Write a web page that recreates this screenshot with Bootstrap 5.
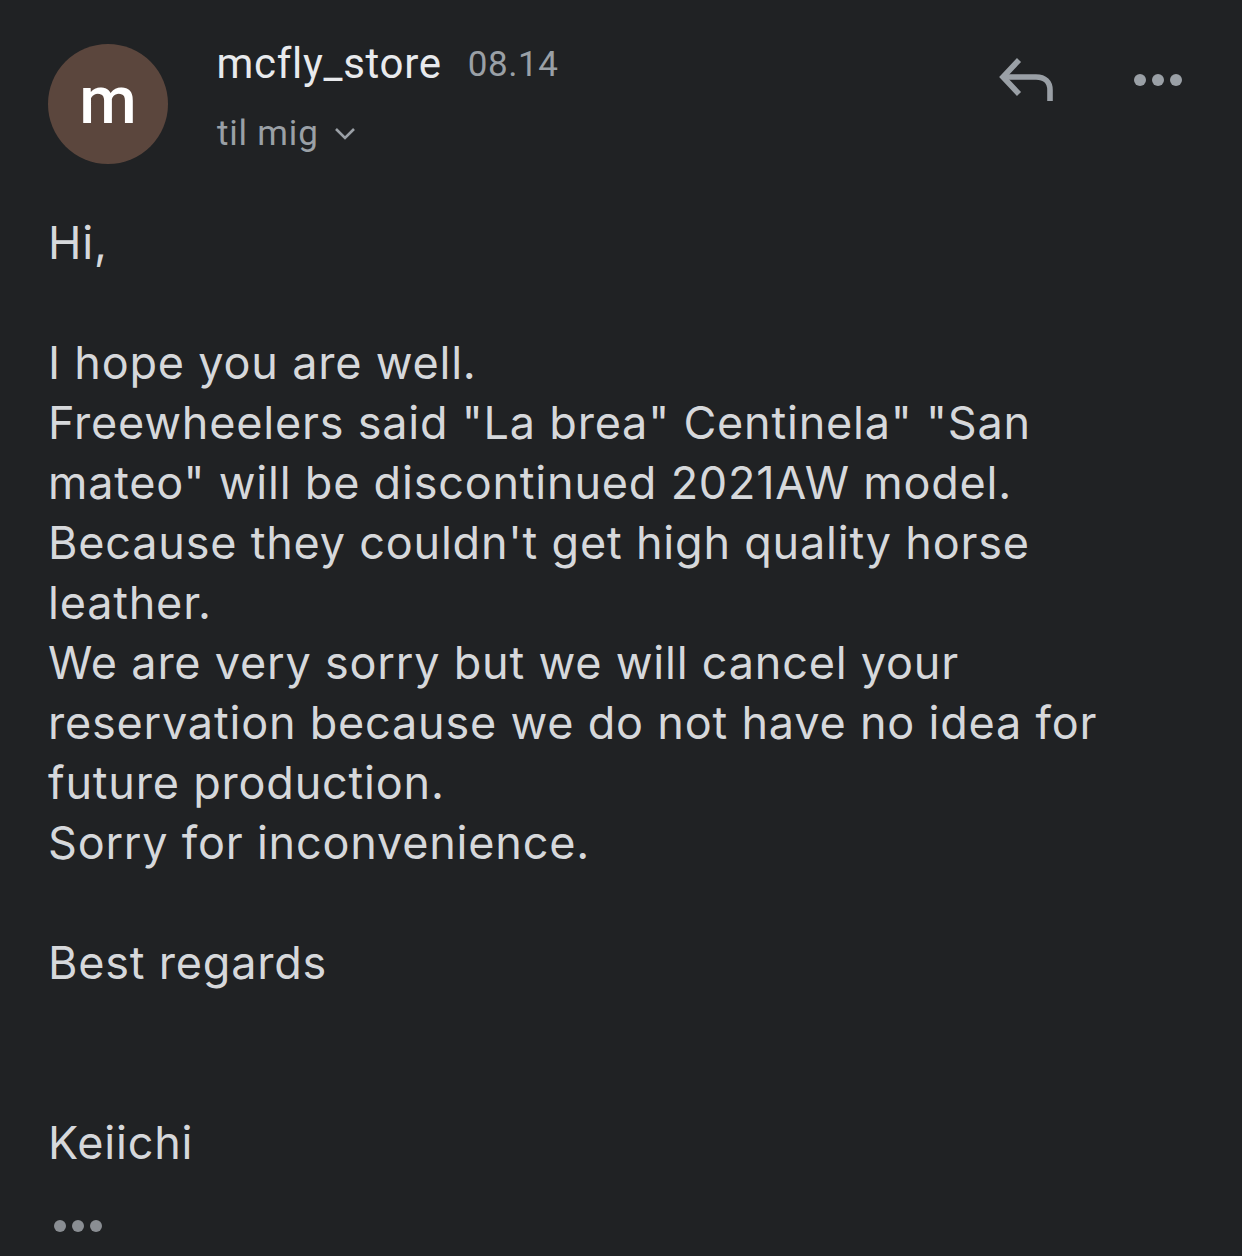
<!DOCTYPE html>
<html lang="da"><head><meta charset="utf-8"><title>Mail</title>
<link href="https://cdn.jsdelivr.net/npm/bootstrap@5.3.0/dist/css/bootstrap.min.css" rel="stylesheet">
<style>
html,body{background:#202224;margin:0}
body{width:1242px;height:1256px;overflow:hidden;font-family:Roboto,"Liberation Sans",sans-serif;color:#dadce0}
.mail-wrap{padding:44px 48px 0 48px}
.avatar-disc{width:120px;height:120px;border-radius:50%;background:#5b463d;color:#fff;font-size:66px;line-height:113px;text-align:center;font-family:Roboto,sans-serif;font-weight:500;flex:none}
.head-text{margin-left:49px;flex:1 1 auto}
.sender-name{font-size:42px;line-height:40px;color:#e8eaed;letter-spacing:.7px;margin-left:-.5px}
.sent-time{font-size:35px;line-height:42px;color:#9aa0a6;margin-left:26px;letter-spacing:.6px}
.to-line{font-size:35px;line-height:40px;color:#9aa0a6;margin-top:28px;letter-spacing:.8px}
.body-copy{font-family:Inter,"Liberation Sans",sans-serif;font-size:45px;line-height:60px;color:#d6d8db;margin-top:49px;letter-spacing:.79px;width:1100px}
.body-copy p{margin:0}
.gap-line{height:60px}
.head-actions{margin-top:13px;margin-right:11px;gap:79px}
.more-mark{margin-top:46px;margin-left:5px;display:block}
</style></head>
<body>
<div class="mail-wrap">
<div class="d-flex align-items-start">
<div class="avatar-disc">m</div>
<div class="head-text">
<div class="d-flex align-items-start"><span class="sender-name">mcfly_store</span><span class="sent-time">08.14</span></div>
<div class="to-line d-flex align-items-center">til mig
<svg width="22" height="14" viewBox="0 0 22 14" class="ms-3" fill="none" stroke="#9aa0a6" stroke-width="2.6"><path d="M1 2l9 9 9-9"/></svg></div>
</div>
<div class="d-flex align-items-center head-actions">
<svg width="56" height="46" viewBox="0 0 56 46" fill="none" stroke="#9aa0a6" stroke-width="5.6"><path d="M21 3L5 20l16 17"/><path d="M5 20h33c9 0 14 5 14 13v11"/></svg>
<svg width="50" height="14" viewBox="0 0 50 14" fill="#9aa0a6"><circle cx="7" cy="7" r="6"/><circle cx="25" cy="7" r="6"/><circle cx="43" cy="7" r="6"/></svg>
</div>
</div>
<div class="body-copy">
<p>Hi,</p>
<div class="gap-line"></div>
<p>I hope you are well.</p>
<p>Freewheelers said "La brea" Centinela" "San<br>mateo" will be discontinued 2021AW model.</p>
<p>Because they couldn't get high quality horse<br>leather.</p>
<p>We are very sorry but we will cancel your<br>reservation because we do not have no idea for<br>future production.</p>
<p>Sorry for inconvenience.</p>
<div class="gap-line"></div>
<p>Best regards</p>
<div class="gap-line"></div>
<div class="gap-line"></div>
<p>Keiichi</p>
</div>
<svg class="more-mark" width="50" height="14" viewBox="0 0 50 14" fill="#8a8e93"><circle cx="7" cy="7" r="6"/><circle cx="25" cy="7" r="6"/><circle cx="43" cy="7" r="6"/></svg>
</div>
<script src="https://cdn.jsdelivr.net/npm/bootstrap@5.3.0/dist/js/bootstrap.bundle.min.js"></script>
</body></html>
